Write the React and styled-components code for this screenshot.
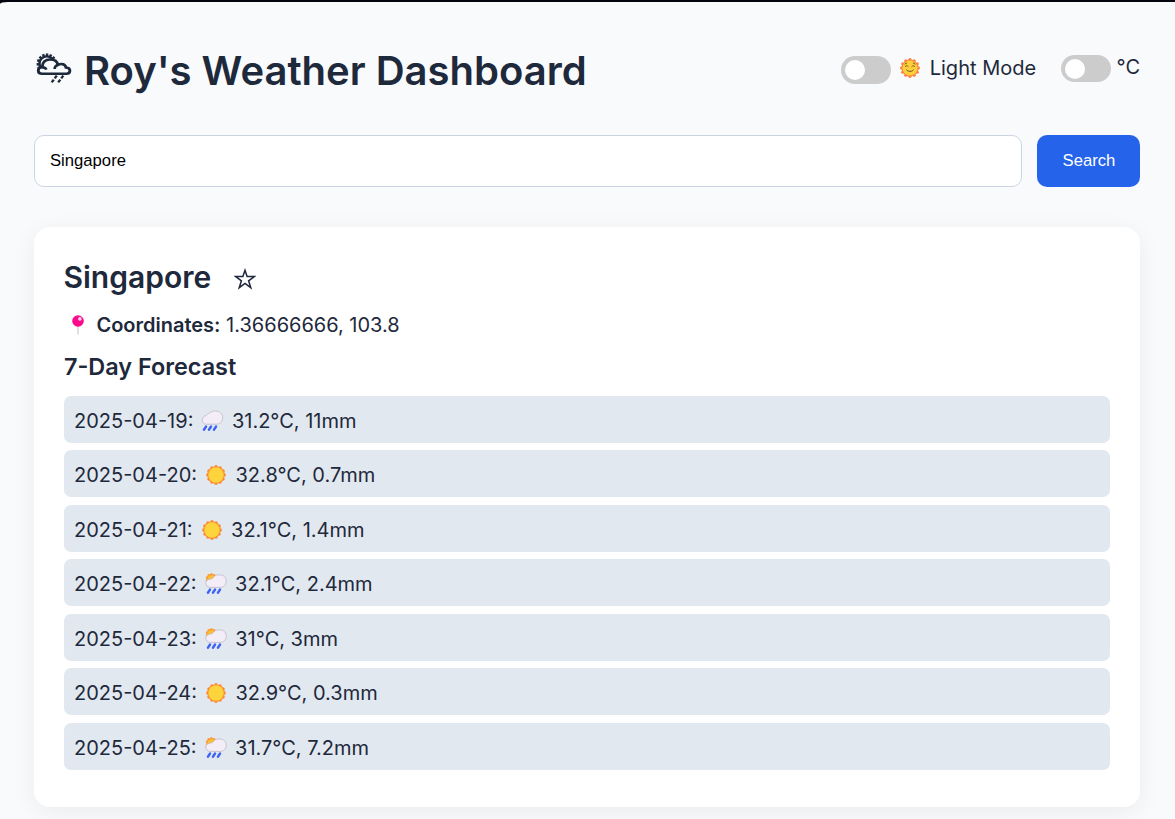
import React, { useState } from "react";
import styled, { createGlobalStyle } from "styled-components";

const GlobalStyle = createGlobalStyle`
  * { box-sizing: border-box; }
  html { background: #04050f; }
  body {
    margin: 0;
    color: #1e293b;
    font-family: Inter, "Liberation Sans", sans-serif;
    font-size: 20px;
    overflow: hidden;
  }
`;

const Page = styled.main`
  height: 817px;
  margin-top: 2px;
  padding: 38px 35px 0 34px;
  overflow: hidden;
  background: #f8fafc;
  border-top-left-radius: 8px 2px;
`;

const Header = styled.header`
  display: flex;
  justify-content: space-between;
  height: 60px;
`;

const Title = styled.h1`
  display: flex;
  align-items: center;
  margin: 0;
  height: 62px;
  font-size: 40px;
  font-weight: 600;
  line-height: 62px;
  white-space: nowrap;
`;

const TitleIcon = styled.svg`
  width: 38px;
  height: 36px;
  margin: 0 12px 6px 0;
`;

const Controls = styled.div`
  display: flex;
  gap: 24.4px;
  padding-top: 15px;
`;

const ToggleGroup = styled.div`
  display: flex;
  align-items: flex-start;
  line-height: 26px;
  white-space: nowrap;
`;

const Track = styled.button`
  display: flex;
  width: 50px;
  height: ${(p) => p.$height}px;
  margin-top: ${(p) => p.$top}px;
  padding: 4px;
  border: 0;
  border-radius: 14px;
  background: #ccc;
`;

const Knob = styled.span`
  width: 20px;
  height: 20px;
  border-radius: 50%;
  background: #fff;
`;

const FaceIcon = styled.svg`
  width: 22px;
  height: 22px;
  margin: 2px 9px 0 8px;
`;

const UnitLabel = styled.span`
  margin-left: 6px;
  line-height: 24px;
`;

const SearchBar = styled.form`
  display: flex;
  gap: 15px;
  margin-top: 35px;
`;

const SearchInput = styled.input`
  flex: 1;
  min-width: 0;
  height: 52px;
  padding: 0 15px;
  border: 1px solid #cbd5e1;
  border-radius: 10px;
  background: #fff;
  color: #000;
  font: 16.67px "Liberation Sans", Arial, sans-serif;
  outline: none;
`;

const SearchButton = styled.button`
  width: 103px;
  height: 52px;
  padding: 0 0 0 1px;
  border: 0;
  border-radius: 10px;
  background: #2563eb;
  color: #fff;
  font: 16.67px "Liberation Sans", Arial, sans-serif;
`;

const Card = styled.section`
  height: 580px;
  margin-top: 40px;
  padding: 30px;
  border-radius: 16px;
  background: #fff;
  box-shadow: 0 5px 25px rgba(0, 0, 0, 0.06);
`;

const CityRow = styled.div`
  display: flex;
  align-items: center;
  height: 40px;
`;

const City = styled.h2`
  margin: 0 0 0 -0.5px;
  font-size: 30px;
  font-weight: 600;
  line-height: 40px;
`;

const StarIcon = styled.svg`
  width: 22px;
  height: 22px;
  margin: 4px 0 0 22.6px;
`;

const Coordinates = styled.p`
  display: flex;
  align-items: center;
  height: 30px;
  margin: 13px 0 0;
  line-height: 30px;
  white-space: pre;

  strong { font-weight: 600; }
`;

const PinIcon = styled.svg`
  width: 14px;
  height: 22px;
  margin: 0 11.4px 0 7px;
`;

const ForecastTitle = styled.h3`
  margin: 12px 0 0;
  font-size: 23.4px;
  font-weight: 600;
  line-height: 30px;
`;

const ForecastList = styled.ul`
  display: flex;
  flex-direction: column;
  gap: 7.45px;
  margin: 14px 0 0;
  padding: 0;
  list-style: none;
`;

const ForecastItem = styled.li`
  display: flex;
  align-items: center;
  height: 47px;
  padding: 3px 10px 0;
  border-radius: 7px;
  background: #e2e8f0;
  white-space: nowrap;
`;

const WeatherIcon = styled.svg`
  width: 24px;
  height: 24px;
  margin: 0 7.5px 0 7px;
`;

const scallops = (n, cx, cy, r, s) =>
  Array.from({ length: n }, (_, i) => {
    const a = (i / n) * Math.PI * 2 - Math.PI / 2;
    return <circle key={i} cx={cx + Math.cos(a) * r} cy={cy + Math.sin(a) * r} r={s} />;
  });

const Drops = () => (
  <path
    d="M6 17.6 4 20.6M11 17.6 9 20.6M16 17.6 14 20.6"
    stroke="#3d63f5"
    strokeWidth="2.5"
    strokeLinecap="round"
  />
);

function ConditionIcon({ kind }) {
  if (kind === "sun") {
    return (
      <WeatherIcon viewBox="0 0 24 24" aria-label="Sunny">
        <g fill="#fb8b34">
          <circle cx="12" cy="12" r="8.7" />
          {scallops(12, 12, 12, 8.2, 1.7)}
        </g>
        <circle cx="12" cy="12" r="7.7" fill="#fdd43b" />
      </WeatherIcon>
    );
  }
  if (kind === "rain") {
    return (
      <WeatherIcon viewBox="0 0 24 24" fill="none" aria-label="Rain">
        <Drops />
        <path
          d="M6.2 15.2C3.8 15.2 2.2 13.6 2.2 11.5c0-2.6 1.5-4.5 4-4.9C7 5.5 8.2 4.4 9.6 4.1 11 2.6 13 1.8 15.4 1.9c2.3.1 3.9.7 5.1 2 1.4.8 2.3 2.5 2.2 4.9-.1 3.6-2.5 6.4-5.9 6.4Z"
          fill="#f3edf8"
          stroke="#b9b0c2"
          strokeWidth=".7"
        />
      </WeatherIcon>
    );
  }
  return (
    <WeatherIcon viewBox="0 0 24 24" fill="none" aria-label="Sun behind rain cloud">
      <g fill="#fb9b38">
        <circle cx="7.4" cy="7" r="5" />
        {scallops(10, 7.4, 7, 4.8, 1.1)}
      </g>
      <circle cx="7.6" cy="7.2" r="4" fill="#ffbf35" />
      <Drops />
      <path
        d="M6.4 15.4C3.6 15.4 1.8 13.6 1.8 11.3c0-2.1 1.4-3.7 3.5-4 1.8-.1 3.4-.7 4.3-2 .8-1.3 2.2-2.3 4-2.3h2.8c3.5 0 5.8 2.7 5.8 6.2 0 3.7-2.5 6.2-6 6.2Z"
        fill="#f3edf8"
        stroke="#b9b0c2"
        strokeWidth=".7"
      />
    </WeatherIcon>
  );
}

const days = [
  ["2025-04-19:", "rain", "31.2°C, 11mm"],
  ["2025-04-20:", "sun", "32.8°C, 0.7mm"],
  ["2025-04-21:", "sun", "32.1°C, 1.4mm"],
  ["2025-04-22:", "mixed", "32.1°C, 2.4mm"],
  ["2025-04-23:", "mixed", "31°C, 3mm"],
  ["2025-04-24:", "sun", "32.9°C, 0.3mm"],
  ["2025-04-25:", "mixed", "31.7°C, 7.2mm"],
];

export default function App() {
  const [query, setQuery] = useState("Singapore");
  return (
    <>
      <GlobalStyle />
      <Page>
        <Header>
          <Title>
            <TitleIcon viewBox="0 0 38 36" fill="none" stroke="#1e293b" aria-hidden="true">
              <circle cx="12.8" cy="13.6" r="8.9" strokeWidth="2.6" strokeDasharray="2.3 1.3" pathLength="54" />
              <circle cx="12.8" cy="13.6" r="7.4" strokeWidth="2.6" />
              <g transform="scale(1.02 .93)">
                <path
                  d="M8 25.6C5.5 25.6 4.2 24.2 4.2 22c0-2.1 1.6-3.4 3.8-3.4C8 13.2 11.2 10.2 15.8 10.2c4.1 0 7 2.2 7.7 5.7 1-.6 2.1-.9 3.3-.9 2.6 0 4.2 1.5 4.6 3.9 2.3.2 3.8 1.4 3.8 3.5 0 2.1-1.3 3.2-3.4 3.2Z"
                  fill="#f8fafc"
                  strokeWidth="2.8"
                />
                <path d="M8 18.6c2.3 0 3.5.9 4.1 2.6M23.6 15.8c-2.3 1-3.4 2.5-3.4 4.7" strokeWidth="2.6" />
              </g>
              <path d="m22.8 25.6-2.1 2.8m-.9 1.2-2.1 2.8m11.6-6.8-2.1 2.8m-.9 1.2-2.1 2.8" strokeWidth="2.4" />
            </TitleIcon>
            Roy's Weather Dashboard
          </Title>
          <Controls>
            <ToggleGroup>
              <Track type="button" $height={28} $top={1} aria-label="Toggle theme">
                <Knob />
              </Track>
              <FaceIcon viewBox="0 0 24 24" fill="none" aria-hidden="true">
                <g fill="#fb8444">
                  <circle cx="12" cy="12" r="9.2" />
                  {scallops(12, 12, 12, 9.1, 1.8)}
                </g>
                <circle cx="12" cy="12" r="8.2" fill="#fdd03a" />
                <path
                  d="M6.8 10.4c.9-1.2 2.2-1.2 3.2 0m4 0c1-1.2 2.3-1.2 3.2 0M8.3 14.2c1.8 2.1 5.6 2.1 7.4 0M6.6 7.6 8.4 6.6m7.2 0 1.8 1"
                  stroke="#6b4a2c"
                  strokeWidth="1"
                  strokeLinecap="round"
                />
              </FaceIcon>
              Light Mode
            </ToggleGroup>
            <ToggleGroup>
              <Track type="button" $height={27} $top={0} aria-label="Toggle units">
                <Knob />
              </Track>
              <UnitLabel>°C</UnitLabel>
            </ToggleGroup>
          </Controls>
        </Header>

        <SearchBar onSubmit={(e) => e.preventDefault()}>
          <SearchInput value={query} onChange={(e) => setQuery(e.target.value)} />
          <SearchButton>Search</SearchButton>
        </SearchBar>

        <Card>
          <CityRow>
            <City>Singapore</City>
            <StarIcon viewBox="0 0 22 22" fill="none" aria-label="Add to favourites">
              <path
                d="m11 2.3 2.1 6.3h7.2l-5.7 4.2 2.2 6.9L11 15.5l-5.8 4.2 2.2-6.9-5.7-4.2h7.2Z"
                stroke="#1e293b"
                strokeWidth="1.5"
              />
            </StarIcon>
          </CityRow>
          <Coordinates>
            <PinIcon viewBox="0 0 14 22" aria-hidden="true">
              <path d="M6.4 11h1.2v9L7 21l-.6-1Z" fill="#cfccd3" />
              <circle cx="7" cy="7" r="5.8" fill="#fc0b8c" />
              <circle cx="8.9" cy="4.9" r="1.8" fill="#ffd5ee" />
            </PinIcon>
            <strong>Coordinates:</strong> 1.36666666, 103.8
          </Coordinates>
          <ForecastTitle>7-Day Forecast</ForecastTitle>
          <ForecastList>
            {days.map(([date, kind, values]) => (
              <ForecastItem key={date}>
                <span>{date}</span>
                <ConditionIcon kind={kind} />
                <span>{values}</span>
              </ForecastItem>
            ))}
          </ForecastList>
        </Card>
      </Page>
    </>
  );
}
